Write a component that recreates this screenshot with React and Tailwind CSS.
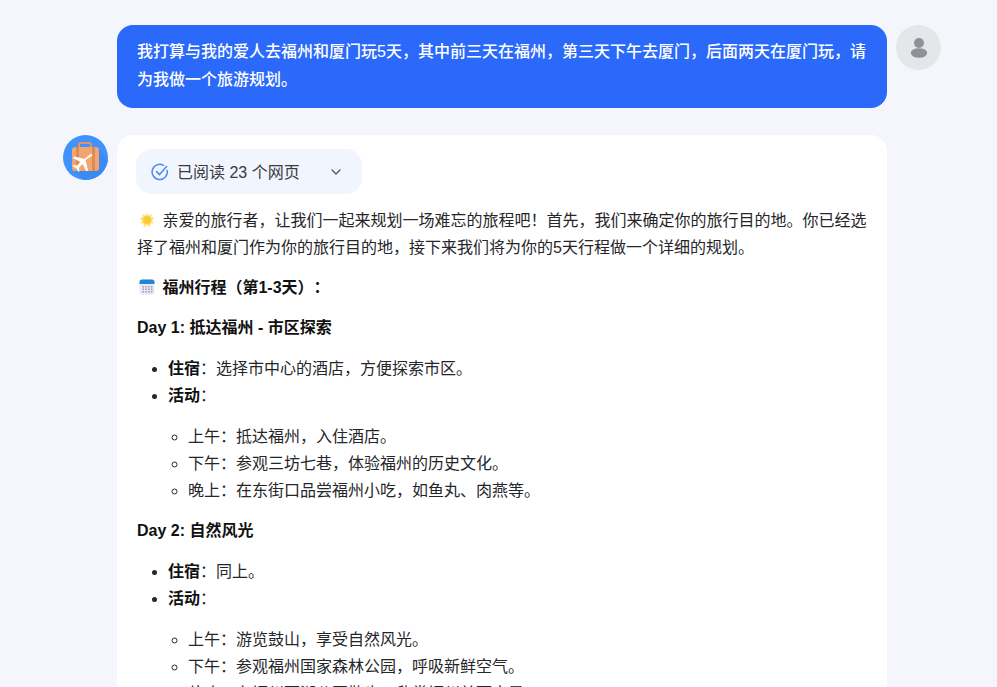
import React from "react";

function UserAvatar() {
  return (
    <div className="w-[45px] h-[45px] rounded-full bg-[#e5e6ea] flex items-center justify-center shrink-0">
      <svg width="18" height="22" viewBox="0 0 18 22">
        <circle cx="9" cy="6" r="5" fill="#8f9098" />
        <ellipse cx="9" cy="16" rx="8.2" ry="4.8" fill="#8f9098" />
      </svg>
    </div>
  );
}

function BotAvatar() {
  return (
    <div className="w-[45px] h-[45px] rounded-full bg-[#3f92ff] shrink-0 overflow-hidden">
      <svg width="45" height="45" viewBox="0 0 45 45">
        <path d="M35 13 L45 25 L45 45 L20 45 L9 33 Z" fill="#3a8af5" />
        <path d="M16 12 v-2.5 a1.5 1.5 0 0 1 1.5-1.5 h9 a1.5 1.5 0 0 1 1.5 1.5 V12" fill="none" stroke="#e8935c" strokeWidth="2" />
        <rect x="9" y="12" width="27" height="24" rx="3" fill="#f3a570" />
        <rect x="13" y="12" width="3" height="24" fill="#e08a55" />
        <rect x="29" y="12" width="3" height="24" fill="#e08a55" />
        <path d="M29.5 19.5 c-1.4-.6-3 .2-4.2 1.2 L21.5 24 L11.5 21.5 L10 23 L17.5 27 L14 30.5 L10.5 30 L9.5 31 L13.2 33.2 L15.4 37 L16.4 36 L16 32.5 L19.5 29 L23.5 36.5 L25 35 L22.5 25 L28 21.6 c.8-.6 1.6-1.4 1.5-2.1 Z" fill="#fff" />
      </svg>
    </div>
  );
}

function Sun() {
  return (
    <svg width="16" height="16" viewBox="0 0 16 16" className="inline-block align-[-2px] ml-[2px] mr-[3px]">
      <path d="M8 .5 L9.3 3.4 L12.6 2 L12.2 5 L15.5 6.5 L12.8 8.6 L15 11.5 L11.7 11.6 L11 15 L8 13.2 L5 15 L4.3 11.6 L1 11.5 L3.2 8.6 L.5 6.5 L3.8 5 L3.4 2 L6.7 3.4 Z" fill="#ffe27a" />
      <circle cx="8" cy="8" r="4" fill="#fcc93a" />
    </svg>
  );
}

function Calendar() {
  return (
    <svg width="16" height="16" viewBox="0 0 16 16" className="inline-block align-[-2px] ml-[2px] mr-[3px]">
      <rect x=".5" y=".5" width="15" height="15" rx="2.5" fill="#ece8f4" />
      <path d="M.5 5 V3 A2.5 2.5 0 0 1 3 .5 H13 A2.5 2.5 0 0 1 15.5 3 V5 Z" fill="#1f86d0" />
      {[3.5, 6.3, 9.1, 11.9].flatMap((x) =>
        [7, 9.5, 12].map((y) => <rect key={x + "-" + y} x={x} y={y} width="1.5" height="1.5" fill="#9a94c0" />)
      )}
    </svg>
  );
}

function Sub({ items }) {
  return (
    <ul className="list-[circle] pl-[51px] mt-[14px] mb-0">
      {items.map((t) => (
        <li key={t} className="h-[27px]">{t}</li>
      ))}
    </ul>
  );
}

function Day({ title, stay, items }) {
  return (
    <>
      <p className="font-bold mt-[13px] text-[#111]">{title}</p>
      <ul className="list-disc pl-[31px] mt-[14px]">
        <li className="h-[27px]"><b className="font-bold text-[#111]">住宿</b>：{stay}</li>
        <li className="h-[27px]"><b className="font-bold text-[#111]">活动</b>：</li>
      </ul>
      <Sub items={items} />
    </>
  );
}

export default function App() {
  return (
    <div
      className="h-screen overflow-hidden bg-[#f4f6fb] text-[16px] leading-[27px] text-[#26262a] pt-[25px] pl-[63px] [text-spacing-trim:space-all]"
      style={{ fontFamily: '"Liberation Sans", "Noto Sans CJK SC", sans-serif' }}
    >
      <div className="flex gap-[9px] w-[878px]">
        <div className="ml-[54px] w-[770px] h-[83px] rounded-2xl bg-[#2b69fb] text-white font-medium leading-[28px] px-[20px] pt-[13px]">
          我打算与我的爱人去福州和厦门玩5天，其中前三天在福州，第三天下午去厦门，后面两天在厦门玩，请为我做一个旅游规划。
        </div>
        <UserAvatar />
      </div>

      <div className="flex gap-[9px] mt-[27px]">
        <BotAvatar />
        <div className="w-[770px] bg-white rounded-t-2xl px-[20px] pt-[14px]">
          <div className="-ml-[1px] w-[226px] h-[45px] rounded-2xl bg-[#f1f5fd] flex items-center pl-[15px] text-[#3a3a40]">
            <svg width="18" height="18" viewBox="0 0 18 18" fill="none" stroke="#4a8af4" strokeWidth="1.5" strokeLinecap="round" strokeLinejoin="round" className="mr-[8px] shrink-0">
              <path d="M16.2 7.6 A7.6 7.6 0 1 1 12.5 2.3" />
              <path d="M5.6 8.6 L8.6 11.6 L15.6 3.6" />
            </svg>
            <span className="whitespace-nowrap w-[125px] mt-[1px]">已阅读 23 个网页</span>
            <svg width="10" height="6" viewBox="0 0 10 6" fill="none" stroke="#55555c" strokeWidth="1.3" strokeLinecap="round" strokeLinejoin="round" className="ml-[29px]">
              <path d="M1 1 L5 5 L9 1" />
            </svg>
          </div>

          <p className="mt-[13px]">
            <Sun /> 亲爱的旅行者，让我们一起来规划一场难忘的旅程吧！首先，我们来确定你的旅行目的地。你已经选择了福州和厦门作为你的旅行目的地，接下来我们将为你的5天行程做一个详细的规划。
          </p>
          <p className="font-bold mt-[13px] text-[#111]">
            <Calendar /> 福州行程（第1-3天）：
          </p>
          <Day
            title="Day 1: 抵达福州 - 市区探索"
            stay="选择市中心的酒店，方便探索市区。"
            items={["上午：抵达福州，入住酒店。", "下午：参观三坊七巷，体验福州的历史文化。", "晚上：在东街口品尝福州小吃，如鱼丸、肉燕等。"]}
          />
          <Day
            title="Day 2: 自然风光"
            stay="同上。"
            items={["上午：游览鼓山，享受自然风光。", "下午：参观福州国家森林公园，呼吸新鲜空气。", "傍晚：在福州西湖公园散步，欣赏福州美丽夜景。"]}
          />
        </div>
      </div>
    </div>
  );
}
